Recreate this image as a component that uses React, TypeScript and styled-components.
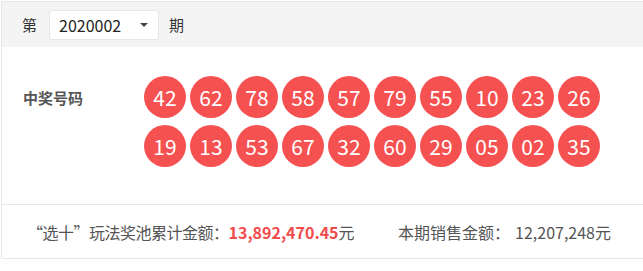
import React from "react";
import styled, { createGlobalStyle } from "styled-components";

const Global = createGlobalStyle`
  html, body { margin: 0; padding: 0; background: #fff; overflow: hidden; }
  body { font-family: "Noto Sans CJK SC", "Open Sans", sans-serif; }
`;

const Panel = styled.div`
  margin: 1px 0 0 1px;
  border-top: 1px solid #e6e6e6;
  border-left: 1px solid #e6e6e6;
`;

const Header = styled.div`
  height: 45px;
  background: #f4f4f4;
  display: flex;
  align-items: center;
  padding-left: 20px;
  font-size: 15px;
  color: #333;
`;

const Word = styled.span`
  line-height: 1;
`;

const Select = styled.div`
  box-sizing: border-box;
  margin: 0 10px 0 12px;
  width: 110px;
  height: 30px;
  background: #fff;
  border: 1px solid #e8e8e8;
  border-radius: 2px;
  display: flex;
  align-items: center;
  justify-content: space-between;
  padding: 0 10px 0 9px;
  font-size: 16px;
  color: #222;
`;

const Caret = styled.span`
  width: 0;
  height: 0;
  border-left: 4px solid transparent;
  border-right: 4px solid transparent;
  border-top: 4px solid #444;
`;

const Body = styled.div`
  display: flex;
  align-items: flex-start;
  padding: 29px 0 37px 21px;
  border-bottom: 1px solid #e8e8e8;
`;

const Label = styled.div`
  width: 121px;
  height: 42px;
  display: flex;
  align-items: center;
  font-size: 15px;
  font-weight: bold;
  color: #555;
`;

const Balls = styled.div`
  display: grid;
  grid-template-columns: repeat(10, 42px);
  column-gap: 4px;
  row-gap: 7px;
`;

const Ball = styled.div`
  width: 42px;
  height: 42px;
  border-radius: 50%;
  background: #f65151;
  color: #fff;
  font-size: 21px;
  display: flex;
  align-items: center;
  justify-content: center;
  line-height: 1;
`;

const Footer = styled.div`
  height: 53px;
  display: flex;
  align-items: center;
  padding-left: 25px;
  font-size: 16px;
  color: #555;
  border-bottom: 1px solid #e8e8e8;
  white-space: nowrap;
`;

const Stat = styled.span<{ $gap?: number; $tight?: boolean }>`
  margin-right: ${(p) => p.$gap ?? 0}px;
  letter-spacing: ${(p) => (p.$tight ? "-0.5px" : "0")};
`;

const Amount = styled.span`
  margin-left: 5px;
`;

const Red = styled.b`
  color: #f24b4b;
  font-size: 16px;
  letter-spacing: 0;
`;

const numbers = [
  "42", "62", "78", "58", "57", "79", "55", "10", "23", "26",
  "19", "13", "53", "67", "32", "60", "29", "05", "02", "35",
];

export default function App() {
  return (
    <>
      <Global />
      <Panel>
        <Header>
          <Word>第</Word>
          <Select>
            <span>2020002</span>
            <Caret />
          </Select>
          <Word>期</Word>
        </Header>
        <Body>
          <Label>中奖号码</Label>
          <Balls>
            {numbers.map((n, i) => (
              <Ball key={i}>{n}</Ball>
            ))}
          </Balls>
        </Body>
        <Footer>
          <Stat $gap={44} $tight>
            “选十”玩法奖池累计金额：<Red>13,892,470.45</Red>元
          </Stat>
          <Stat>
            本期销售金额：<Amount>12,207,248元</Amount>
          </Stat>
        </Footer>
      </Panel>
    </>
  );
}
